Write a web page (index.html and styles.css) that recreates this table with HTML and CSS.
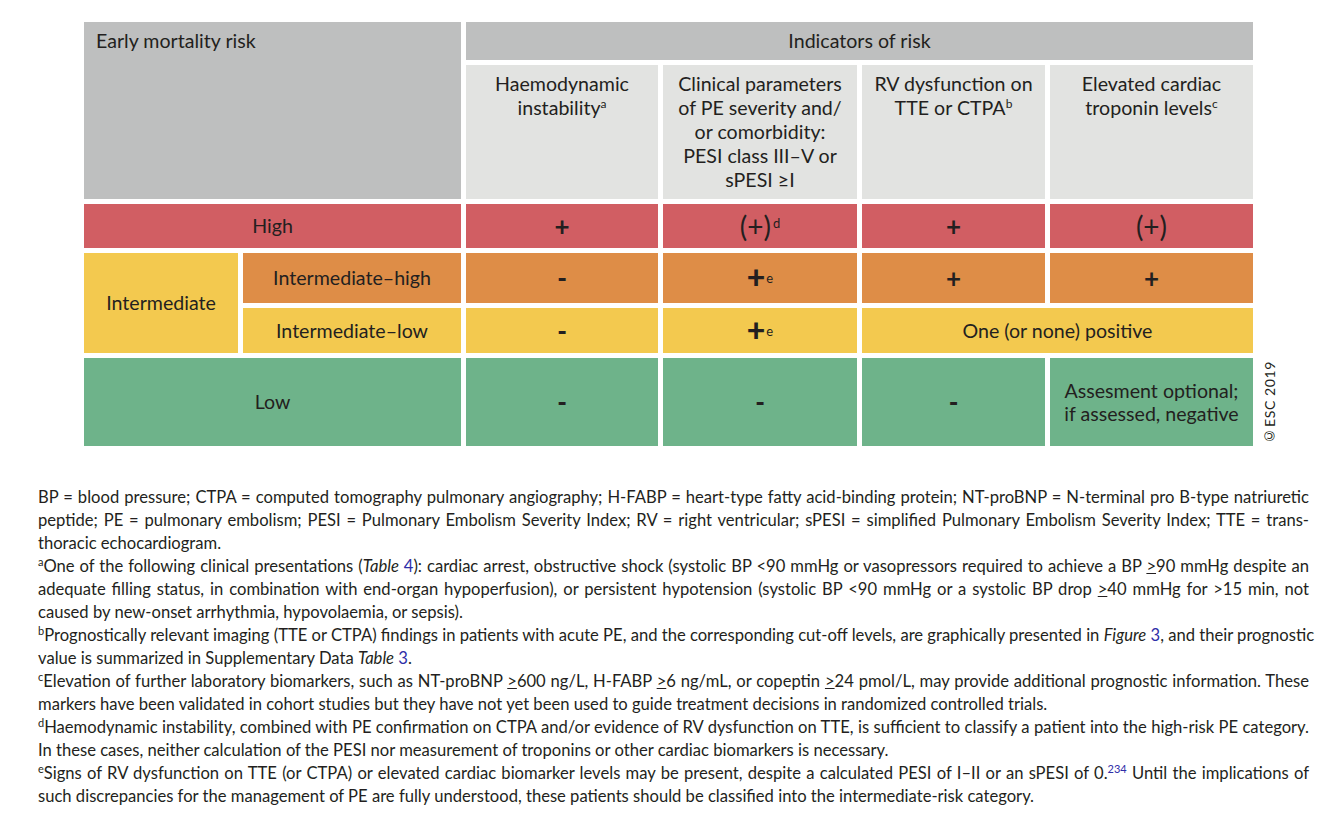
FILE: index.html
```html
<!DOCTYPE html>
<html lang="en">
<head>
<meta charset="utf-8">
<title>Classification of pulmonary embolism severity</title>
<link rel="stylesheet" href="styles.css">
</head>
<body>
<div class="page">
  <div class="figure">
    <div class="grid">
      <div class="cell head early"><span>Early mortality risk</span></div>
      <div class="cell head indicators"><span>Indicators of risk</span></div>
      <div class="cell sub c3"><span>Haemodynamic<br>instability<sup>a</sup></span></div>
      <div class="cell sub c4"><span>Clinical parameters<br>of PE severity and/<br>or comorbidity:<br>PESI class III–V or<br>sPESI ≥I</span></div>
      <div class="cell sub c5"><span>RV dysfunction on<br>TTE or CTPA<sup>b</sup></span></div>
      <div class="cell sub c6"><span>Elevated cardiac<br>troponin levels<sup>c</sup></span></div>

      <div class="cell red r3 label"><span>High</span></div>
      <div class="cell red r3 c3"><span class="plus">+</span></div>
      <div class="cell red r3 c4"><span><span class="paren">(+)</span><span class="mark">d</span></span></div>
      <div class="cell red r3 c5"><span class="plus">+</span></div>
      <div class="cell red r3 c6"><span class="paren">(+)</span></div>

      <div class="cell yellow inter"><span>Intermediate</span></div>
      <div class="cell orange r4 c2"><span>Intermediate–high</span></div>
      <div class="cell orange r4 c3"><span class="minus">-</span></div>
      <div class="cell orange r4 c4"><span><span class="bigplus">+</span><span class="mark low">e</span></span></div>
      <div class="cell orange r4 c5"><span class="plus">+</span></div>
      <div class="cell orange r4 c6"><span class="plus">+</span></div>

      <div class="cell yellow r5 c2"><span>Intermediate–low</span></div>
      <div class="cell yellow r5 c3"><span class="minus">-</span></div>
      <div class="cell yellow r5 c4"><span><span class="bigplus">+</span><span class="mark low">e</span></span></div>
      <div class="cell yellow r5 span2r"><span>One (or none) positive</span></div>

      <div class="cell green r6 label"><span>Low</span></div>
      <div class="cell green r6 c3"><span class="minus">-</span></div>
      <div class="cell green r6 c4"><span class="minus">-</span></div>
      <div class="cell green r6 c5"><span class="minus">-</span></div>
      <div class="cell green r6 c6 two"><span>Assesment optional;<br>if assessed, negative</span></div>
    </div>
    <div class="copy">©ESC 2019</div>
  </div>

  <div class="notes">
    <div class="ln">BP = blood pressure; CTPA = computed tomography pulmonary angiography; H-FABP = heart-type fatty acid-binding protein; NT-proBNP = N-terminal pro B-type natriuretic</div>
    <div class="ln">peptide; PE = pulmonary embolism; PESI = Pulmonary Embolism Severity Index; RV = right ventricular; sPESI = simplified Pulmonary Embolism Severity Index; TTE = trans-</div>
    <div class="ln end">thoracic echocardiogram.</div>
    <div class="ln"><sup>a</sup>One of the following clinical presentations (<i>Table</i> <span class="ref">4</span>): cardiac arrest, obstructive shock (systolic BP &lt;90 mmHg or vasopressors required to achieve a BP <u>&gt;</u>90 mmHg despite an</div>
    <div class="ln">adequate filling status, in combination with end-organ hypoperfusion), or persistent hypotension (systolic BP &lt;90 mmHg or a systolic BP drop <u>&gt;</u>40 mmHg for &gt;15 min, not</div>
    <div class="ln end">caused by new-onset arrhythmia, hypovolaemia, or sepsis).</div>
    <div class="ln"><sup>b</sup>Prognostically relevant imaging (TTE or CTPA) findings in patients with acute PE, and the corresponding cut-off levels, are graphically presented in <i>Figure</i> <span class="ref">3</span>, and their prognostic</div>
    <div class="ln end">value is summarized in Supplementary Data <i>Table</i> <span class="ref">3</span>.</div>
    <div class="ln"><sup>c</sup>Elevation of further laboratory biomarkers, such as NT-proBNP <u>&gt;</u>600 ng/L, H-FABP <u>&gt;</u>6 ng/mL, or copeptin <u>&gt;</u>24 pmol/L, may provide additional prognostic information. These</div>
    <div class="ln end">markers have been validated in cohort studies but they have not yet been used to guide treatment decisions in randomized controlled trials.</div>
    <div class="ln"><sup>d</sup>Haemodynamic instability, combined with PE confirmation on CTPA and/or evidence of RV dysfunction on TTE, is sufficient to classify a patient into the high-risk PE category.</div>
    <div class="ln end">In these cases, neither calculation of the PESI nor measurement of troponins or other cardiac biomarkers is necessary.</div>
    <div class="ln"><sup>e</sup>Signs of RV dysfunction on TTE (or CTPA) or elevated cardiac biomarker levels may be present, despite a calculated PESI of I–II or an sPESI of 0.<sup class="ref">234</sup> Until the implications of</div>
    <div class="ln end">such discrepancies for the management of PE are fully understood, these patients should be classified into the intermediate-risk category.</div>
  </div>
</div>
</body>
</html>
```

FILE: styles.css
```css
body {
  margin: 0;
  background: #ffffff;
  color: #231f20;
  font-family: Lato, "Liberation Sans", sans-serif;
}

.page {
  padding-top: 22px;
}

.figure {
  display: flex;
  align-items: flex-end;
  gap: 8px;
  margin-left: 84px;
}

.grid {
  display: grid;
  grid-template-columns: 154px 218px 192px 194px 183px 203px;
  grid-template-rows: 38px 134px 44px 50px 45px 88px;
  gap: 5px;
  font-size: 19.6px;
}

.cell {
  display: flex;
  align-items: center;
  justify-content: center;
  text-align: center;
  line-height: 24px;
}

.cell sup {
  font-size: 12px;
  line-height: 0;
  vertical-align: 7px;
}

.head {
  background: #bebfbf;
}

.early {
  grid-column: 1 / 3;
  grid-row: 1 / 3;
  align-items: flex-start;
  justify-content: flex-start;
  padding: 7px 12px;
}

.indicators {
  grid-column: 3 / 7;
  grid-row: 1;
}

.sub {
  grid-row: 2;
  background: #e2e3e1;
  align-items: flex-start;
  padding-top: 7px;
}

.red { background: #d15e63; }
.orange { background: #de8d47; }
.yellow { background: #f3c94f; }
.green { background: #6eb38a; }

.r3 { grid-row: 3; }
.r4 { grid-row: 4; }
.r5 { grid-row: 5; }
.r6 { grid-row: 6; }
.c2 { grid-column: 2; }
.c3 { grid-column: 3; }
.c4 { grid-column: 4; }
.c5 { grid-column: 5; }
.c6 { grid-column: 6; }
.label { grid-column: 1 / 3; }
.span2r { grid-column: 5 / 7; }
.inter { grid-column: 1; grid-row: 4 / 6; }

.plus {
  font-size: 26px;
  font-weight: 700;
}

.bigplus {
  font-size: 32px;
  font-weight: 900;
  line-height: 24px;
  vertical-align: -3px;
}

.minus {
  font-size: 26px;
  font-weight: 900;
}

.paren {
  font-size: 28px;
}

.mark {
  font-size: 13px;
  vertical-align: 9px;
  margin-left: 2px;
}

.mark.low {
  vertical-align: 3px;
  margin-left: 1px;
}

.two {
  line-height: 23px;
}

.copy {
  writing-mode: vertical-rl;
  transform: rotate(180deg);
  font-size: 14px;
  letter-spacing: 0.6px;
  margin-bottom: 2px;
}

.notes {
  margin: 40px 25px 0 38px;
  font-size: 16.6px;
  line-height: 23px;
}

.ln {
  text-align: justify;
  text-align-last: justify;
  white-space: nowrap;
}

.ln.end {
  text-align-last: left;
}

.notes sup {
  font-size: 11px;
  line-height: 0;
  vertical-align: 6px;
}

.ref {
  color: #2e2ea8;
}

.notes u {
  text-decoration-thickness: 1px;
  text-underline-offset: 1px;
}
```
